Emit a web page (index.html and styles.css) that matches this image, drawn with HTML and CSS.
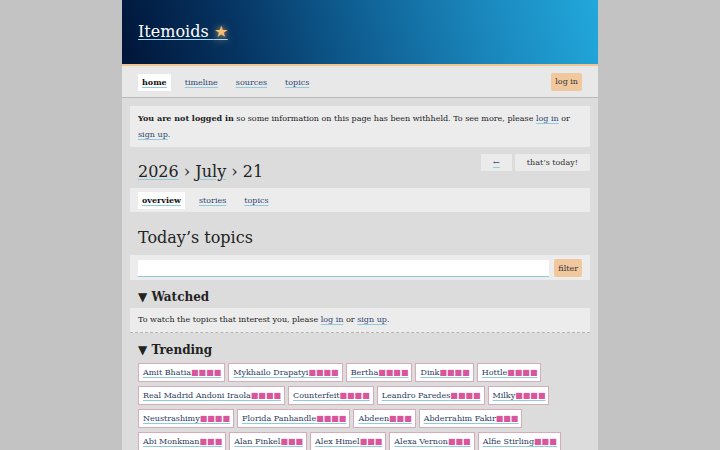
FILE: index.html
```html
<!DOCTYPE html>
<html lang="en">
<head>
    <title>Itemoids - 2026 July 21</title>
    <meta charset="UTF-8">
    <meta name="viewport" content="width=device-width, initial-scale=1.0">
    <link rel="stylesheet" href="styles.css">
</head>
<body>
    <div class="page">
        <header class="masthead">
            <a class="site-title" href="#">Itemoids <span class="star">★</span></a>
        </header>

        <nav class="topnav">
            <a class="current" href="#">home</a>
            <a href="#">timeline</a>
            <a href="#">sources</a>
            <a href="#">topics</a>
            <a class="login" href="#">log in</a>
        </nav>

        <main class="content">
            <p class="notice"><strong>You are not logged in</strong> so some information on this page has been withheld. To see more, please <a href="#">log in</a> or <a href="#">sign up</a>.</p>

            <div class="dateline">
                <h1><a href="#">2026</a> › <a href="#">July</a> › 21</h1>
                <div class="datenav">
                    <a class="btn" href="#">←</a>
                    <span class="btn">that’s today!</span>
                </div>
            </div>

            <nav class="subnav">
                <a class="current" href="#">overview</a>
                <a href="#">stories</a>
                <a href="#">topics</a>
            </nav>

            <h2>Today’s topics</h2>

            <form class="filter">
                <input type="text" name="q" aria-label="filter topics">
                <button type="button">filter</button>
            </form>

            <h3>▼ Watched</h3>
            <p class="watch-note">To watch the topics that interest you, please <a href="#">log in</a> or <a href="#">sign up</a>.</p>

            <h3>▼ Trending</h3>
            <ul class="tags">
                <li><a href="#">Amit Bhatia<span class="bars">■■■■</span></a></li>
                <li><a href="#">Mykhailo Drapatyi<span class="bars">■■■■</span></a></li>
                <li><a href="#">Bertha<span class="bars">■■■■</span></a></li>
                <li><a href="#">Dink<span class="bars">■■■■</span></a></li>
                <li><a href="#">Hottle<span class="bars">■■■■</span></a></li>
                <li><a href="#">Real Madrid Andoni Iraola<span class="bars">■■■■</span></a></li>
                <li><a href="#">Counterfeit<span class="bars">■■■■</span></a></li>
                <li><a href="#">Leandro Paredes<span class="bars">■■■■</span></a></li>
                <li><a href="#">Milky<span class="bars">■■■■</span></a></li>
                <li><a href="#">Neustrashimy<span class="bars">■■■■</span></a></li>
                <li><a href="#">Florida Panhandle<span class="bars">■■■■</span></a></li>
                <li><a href="#">Abdeen<span class="bars">■■■</span></a></li>
                <li><a href="#">Abderrahim Fakir<span class="bars">■■■</span></a></li>
                <li><a href="#">Abi Monkman<span class="bars">■■■</span></a></li>
                <li><a href="#">Alan Finkel<span class="bars">■■■</span></a></li>
                <li><a href="#">Alex Himel<span class="bars">■■■</span></a></li>
                <li><a href="#">Alexa Vernon<span class="bars">■■■</span></a></li>
                <li><a href="#">Alfie Stirling<span class="bars">■■■</span></a></li>
                <li><a href="#">Andy Burnham<span class="bars">■■■</span></a></li>
                <li><a href="#">Anthropic<span class="bars">■■■</span></a></li>
                <li><a href="#">Arsenal<span class="bars">■■■</span></a></li>
            </ul>
        </main>
    </div>
</body>
</html>
```

FILE: styles.css
```css
body {
    margin: 0;
    background-color: #c3c3c3;
    font-family: "DejaVu Serif", serif;
    font-size: 8px;
    color: #222;
}

a {
    color: #34466e;
    text-decoration: underline;
    text-decoration-color: #8ccbe0;
    text-underline-offset: 2px;
}

.page {
    width: 476px;
    margin: 0 auto;
    min-height: 450px;
    background-color: #dcdcdc;
}

/* header */

.masthead {
    height: 64px;
    padding: 0 16px;
    display: flex;
    align-items: center;
    border-bottom: 2px solid #f3c58e;
    background: linear-gradient(75deg, #001538 0%, #063563 25%, #0f5f93 50%, #1a86bb 75%, #22a8dc 100%);
}

.site-title {
    font-size: 16px;
    line-height: 20px;
    color: #fff;
    text-decoration-color: #a6d8f0;
}

.star {
    color: #f6c170;
    text-shadow: 0 0 6px rgba(255, 196, 120, 0.8);
}

/* top navigation */

.topnav {
    display: flex;
    align-items: center;
    gap: 10px;
    padding: 7px 16px 6px;
    background-color: #e8e8e8;
    border-bottom: 1px solid #b9b9b9;
}

.topnav a,
.subnav a {
    padding: 0 4px;
    line-height: 17px;
}

.topnav .current,
.subnav .current {
    background-color: #fff;
    font-weight: bold;
    color: #111;
}

.topnav .login {
    margin-left: auto;
    line-height: 18px;
    background-color: #f1c89e;
    color: #333;
    text-decoration: none;
    border-radius: 2px;
}

/* main column */

.content {
    padding: 8px 8px 16px;
}

.notice {
    margin: 0;
    padding: 4px 8px;
    line-height: 16px;
    background-color: #ececec;
}

.dateline {
    display: flex;
    justify-content: space-between;
    align-items: flex-start;
    margin-top: 7px;
}

h1 {
    margin: 8px 0 0 8px;
    font-size: 16px;
    font-weight: normal;
    line-height: 20px;
}

h1 a {
    color: #222;
}

.datenav {
    display: flex;
    gap: 3px;
}

.datenav .btn {
    padding: 0 12px;
    line-height: 17px;
    background-color: #ebebeb;
}

span.btn {
    color: #333;
}

.subnav {
    display: flex;
    gap: 10px;
    margin-top: 6px;
    padding: 4px 8px 3px;
    background-color: #ececec;
}

h2 {
    margin: 16px 8px 7px;
    font-size: 16px;
    font-weight: normal;
    line-height: 20px;
}

.filter {
    display: flex;
    align-items: center;
    gap: 5px;
    margin: 0;
    padding: 4px 8px 3px;
    background-color: #ececec;
}

.filter input {
    flex: 1;
    height: 17px;
    box-sizing: border-box;
    padding: 0 4px;
    border: 0;
    border-bottom: 1px solid #8fc9d9;
    background-color: #fff;
    font: inherit;
}

.filter button {
    height: 18px;
    padding: 0 4px;
    border: 0;
    border-radius: 2px;
    background-color: #f1c89e;
    color: #333;
    font: inherit;
}

h3 {
    margin: 9px 8px 3px;
    font-size: 12px;
    line-height: 16px;
}

.watch-note {
    margin: 0;
    padding: 4px 8px;
    line-height: 16px;
    background-color: #ececec;
    border-bottom: 1px dashed #b5b5b5;
}

h3 + .tags {
    margin-top: 5px;
}

.tags {
    list-style: none;
    margin: 0;
    padding: 0 8px;
    display: flex;
    flex-wrap: wrap;
    gap: 4px 3px;
}

.tags a {
    display: block;
    padding: 0 3px 0 4px;
    line-height: 17px;
    background-color: #fff;
    border: 1px solid #d8abbb;
    color: #2c3a5e;
}

.bars {
    color: #d9559c;
}
```
